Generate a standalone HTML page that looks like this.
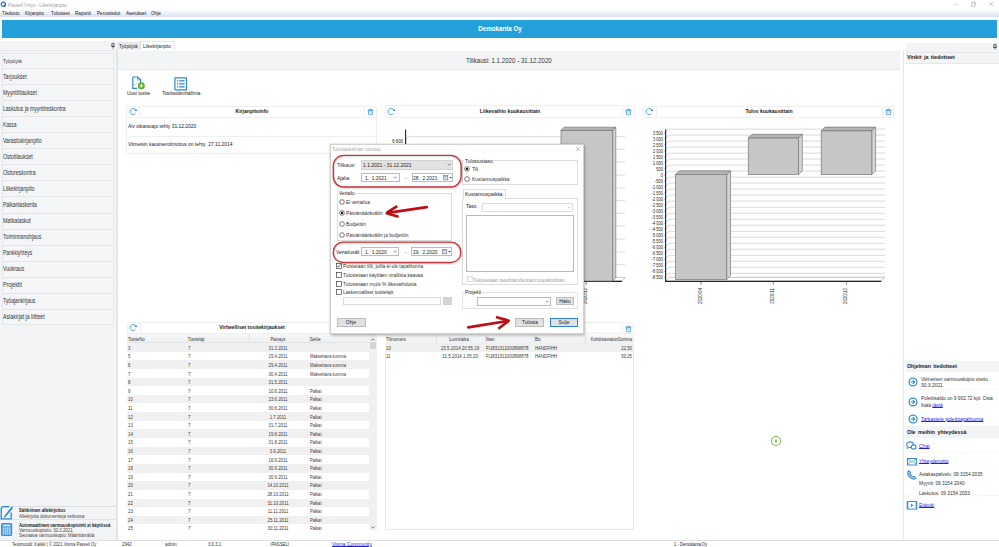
<!DOCTYPE html>
<html><head><meta charset="utf-8"><title>Passeli</title>
<style>
*{margin:0;padding:0;box-sizing:border-box;}
html,body{width:999px;height:547px;overflow:hidden;background:#fff;}
body{position:relative;font-family:"Liberation Sans",sans-serif;}
.t{position:absolute;white-space:nowrap;line-height:1;}
.b{position:absolute;}
svg.b{overflow:visible;}
</style></head><body>
<svg class="b" style="left:0.00px;top:0.00px;" width="8" height="8" viewBox="0 0 8 8"><circle cx="3.4" cy="4.3" r="2.1" fill="none" stroke="#2b5eaa" stroke-width="1.2"/><path d="M2.2 5.6 Q2.6 3.6 4.4 3.2" fill="none" stroke="#fff" stroke-width="0.9"/><circle cx="4.6" cy="5.7" r="0.9" fill="#2b5eaa"/></svg>
<div class="t" style="left:8.00px;top:3px;font-size:5.7px;color:#a0a0a0;transform:scaleX(0.8000);transform-origin:0 0;">Passeli Yritys - Liikekirjanpito</div>
<svg class="b" style="left:950.00px;top:0.00px;" width="50" height="9" viewBox="0 0 50 9"><path d="M3.6 4.4H7.7" stroke="#b4b4b4" stroke-width="0.6"/><rect x="21.5" y="2.9" width="3.3" height="3.3" fill="none" stroke="#a8a8a8" stroke-width="0.55"/><path d="M22.4 2.9V2.1H25.6V5.3H24.8" fill="none" stroke="#a8a8a8" stroke-width="0.5"/><path d="M39.1 2.0L43.1 6.0M43.1 2.0L39.1 6.0" stroke="#a4a4a4" stroke-width="0.55"/></svg>
<div class="b" style="left:0.00px;top:9.00px;width:999.00px;height:8.20px;background:linear-gradient(#ffffff,#f2f4f9 40%,#d9e0ef);"></div>
<div class="t" style="left:2.40px;top:11px;font-size:5.75px;color:#1a1a1a;transform:scaleX(0.8000);transform-origin:0 0;">Tiedosto</div>
<div class="t" style="left:25.00px;top:11px;font-size:5.75px;color:#1a1a1a;transform:scaleX(0.8000);transform-origin:0 0;">Kirjanpito</div>
<div class="t" style="left:50.70px;top:11px;font-size:5.75px;color:#1a1a1a;transform:scaleX(0.8000);transform-origin:0 0;">Tulosteet</div>
<div class="t" style="left:75.00px;top:11px;font-size:5.75px;color:#1a1a1a;transform:scaleX(0.8000);transform-origin:0 0;">Raportit</div>
<div class="t" style="left:96.70px;top:11px;font-size:5.75px;color:#1a1a1a;transform:scaleX(0.8000);transform-origin:0 0;">Perustiedot</div>
<div class="t" style="left:125.60px;top:11px;font-size:5.75px;color:#1a1a1a;transform:scaleX(0.8000);transform-origin:0 0;">Asetukset</div>
<div class="t" style="left:151.00px;top:11px;font-size:5.75px;color:#1a1a1a;transform:scaleX(0.8000);transform-origin:0 0;">Ohje</div>
<div class="b" style="left:2.20px;top:20.20px;width:995.10px;height:17.50px;background:#239fd9;"></div>
<div class="t" style="left:300.00px;width:400px;text-align:center;top:26px;font-size:6.62px;color:#fff;font-weight:bold;transform:scaleX(0.9434);transform-origin:50% 0;">Demokanta Oy</div>
<div class="b" style="left:0.00px;top:40.90px;width:116.00px;height:499.10px;background:#f3f4f6;"></div>
<div class="b" style="left:0.00px;top:49.60px;width:116.00px;height:0.80px;background:#e6e7ea;"></div>
<div class="b" style="left:116.00px;top:50.40px;width:1.60px;height:489.60px;background:#e4e5e7;"></div>
<svg class="b" style="left:111.00px;top:42.50px;" width="4" height="6" viewBox="0 0 4 6"><path d="M0.9 0.4H3.1V3.3H0.9Z" fill="none" stroke="#333" stroke-width="0.7"/><path d="M0.3 3.4H3.7M2 3.4V5.6" stroke="#333" stroke-width="0.7"/></svg>
<div class="b" style="left:2.00px;top:52.50px;width:112.00px;height:272.30px;background:#f4f5f7;border:0.8px solid #e7e8ea;"></div>
<div class="t" style="left:3.20px;top:59px;font-size:5.75px;color:#333;transform:scaleX(0.8000);transform-origin:0 0;">Työpöytä</div>
<div class="b" style="left:2.40px;top:68.01px;width:111.20px;height:0.90px;background:#e4e5e7;"></div>
<div class="t" style="left:3.20px;top:74px;font-size:6.5px;color:#333;transform:scaleX(0.8000);transform-origin:0 0;">Tarjoukset</div>
<div class="b" style="left:2.40px;top:84.07px;width:111.20px;height:0.90px;background:#e4e5e7;"></div>
<div class="t" style="left:3.20px;top:90px;font-size:6.47px;color:#333;transform:scaleX(0.8000);transform-origin:0 0;">Myyntitilaukset</div>
<div class="b" style="left:2.40px;top:100.13px;width:111.20px;height:0.90px;background:#e4e5e7;"></div>
<div class="t" style="left:3.20px;top:106px;font-size:6.4px;color:#333;transform:scaleX(0.7906);transform-origin:0 0;">Laskutus ja myyntireskontra</div>
<div class="b" style="left:2.40px;top:116.19px;width:111.20px;height:0.90px;background:#e4e5e7;"></div>
<div class="t" style="left:3.20px;top:122px;font-size:6.4px;color:#333;transform:scaleX(0.7500);transform-origin:0 0;">Kassa</div>
<div class="b" style="left:2.40px;top:132.25px;width:111.20px;height:0.90px;background:#e4e5e7;"></div>
<div class="t" style="left:3.20px;top:138px;font-size:6.56px;color:#333;transform:scaleX(0.8000);transform-origin:0 0;">Varastokirjanpito</div>
<div class="b" style="left:2.40px;top:148.31px;width:111.20px;height:0.90px;background:#e4e5e7;"></div>
<div class="t" style="left:3.20px;top:154px;font-size:6.45px;color:#333;transform:scaleX(0.8000);transform-origin:0 0;">Ostotilaukset</div>
<div class="b" style="left:2.40px;top:164.37px;width:111.20px;height:0.90px;background:#e4e5e7;"></div>
<div class="t" style="left:3.20px;top:170px;font-size:6.5px;color:#333;transform:scaleX(0.8000);transform-origin:0 0;">Ostoreskontra</div>
<div class="b" style="left:2.40px;top:180.43px;width:111.20px;height:0.90px;background:#e4e5e7;"></div>
<div class="t" style="left:3.20px;top:186px;font-size:6.5px;color:#333;transform:scaleX(0.8000);transform-origin:0 0;">Liikekirjanpito</div>
<div class="b" style="left:2.40px;top:196.49px;width:111.20px;height:0.90px;background:#e4e5e7;"></div>
<div class="t" style="left:3.20px;top:202px;font-size:6.4px;color:#333;transform:scaleX(0.7812);transform-origin:0 0;">Palkanlaskenta</div>
<div class="b" style="left:2.40px;top:212.55px;width:111.20px;height:0.90px;background:#e4e5e7;"></div>
<div class="t" style="left:3.20px;top:218px;font-size:6.5px;color:#333;transform:scaleX(0.8000);transform-origin:0 0;">Matkalaskut</div>
<div class="b" style="left:2.40px;top:228.61px;width:111.20px;height:0.90px;background:#e4e5e7;"></div>
<div class="t" style="left:3.20px;top:234px;font-size:6.4px;color:#333;transform:scaleX(0.7969);transform-origin:0 0;">Toiminnanohjaus</div>
<div class="b" style="left:2.40px;top:244.67px;width:111.20px;height:0.90px;background:#e4e5e7;"></div>
<div class="t" style="left:3.20px;top:250px;font-size:6.4px;color:#333;transform:scaleX(0.7734);transform-origin:0 0;">Pankkiyhteys</div>
<div class="b" style="left:2.40px;top:260.73px;width:111.20px;height:0.90px;background:#e4e5e7;"></div>
<div class="t" style="left:3.20px;top:266px;font-size:6.4px;color:#333;transform:scaleX(0.7906);transform-origin:0 0;">Vuokraus</div>
<div class="b" style="left:2.40px;top:276.79px;width:111.20px;height:0.90px;background:#e4e5e7;"></div>
<div class="t" style="left:3.20px;top:282px;font-size:6.56px;color:#333;transform:scaleX(0.8000);transform-origin:0 0;">Projektit</div>
<div class="b" style="left:2.40px;top:292.85px;width:111.20px;height:0.90px;background:#e4e5e7;"></div>
<div class="t" style="left:3.20px;top:298px;font-size:6.4px;color:#333;transform:scaleX(0.7922);transform-origin:0 0;">Työajankirjaus</div>
<div class="b" style="left:2.40px;top:308.91px;width:111.20px;height:0.90px;background:#e4e5e7;"></div>
<div class="t" style="left:3.20px;top:314px;font-size:6.52px;color:#333;transform:scaleX(0.8000);transform-origin:0 0;">Asiakirjat ja liitteet</div>
<div class="b" style="left:0.00px;top:506.10px;width:116.00px;height:0.80px;background:#dcdde0;"></div>
<div class="b" style="left:0.00px;top:519.00px;width:116.00px;height:0.70px;background:#e2e3e5;"></div>
<svg class="b" style="left:0.00px;top:505.00px;" width="14" height="15" viewBox="0 0 14 15"><path d="M9.4 1.6H2.9L1.2 3.4V13.9H11.2V7.6" fill="none" stroke="#2a86d4" stroke-width="1.3" stroke-linejoin="round"/><path d="M3.7 13.0L4.5 10.7L11.0 2.6Q12.4 1.4 12.9 2.0Q13.1 2.9 12.0 4.3L5.7 11.7Z" fill="#2a86d4"/></svg>
<div class="t" style="left:19.40px;top:509px;font-size:4.5px;color:#1a1a1a;font-weight:bold;transform:scaleX(0.9434);transform-origin:0 0;">Sähköinen allekirjoitus</div>
<div class="t" style="left:19.40px;top:514px;font-size:5.42px;color:#444;transform:scaleX(0.8000);transform-origin:0 0;">Allekirjoita dokumentteja verkossa</div>
<svg class="b" style="left:1.30px;top:523.00px;" width="11.2" height="13" viewBox="0 0 11.2 13"><rect x="0" y="0" width="11.2" height="13" rx="1.6" fill="#3a8fd6"/><rect x="1.7" y="1.5" width="7.8" height="1.9" fill="#d3e8f8"/><rect x="1.600" y="4.400" width="1.625" height="1.425" fill="#d3e8f8"/><rect x="3.725" y="4.400" width="1.625" height="1.425" fill="#d3e8f8"/><rect x="5.850" y="4.400" width="1.625" height="1.425" fill="#d3e8f8"/><rect x="7.975" y="4.400" width="1.625" height="1.425" fill="#d3e8f8"/><rect x="1.600" y="6.325" width="1.625" height="1.425" fill="#d3e8f8"/><rect x="3.725" y="6.325" width="1.625" height="1.425" fill="#d3e8f8"/><rect x="5.850" y="6.325" width="1.625" height="1.425" fill="#d3e8f8"/><rect x="7.975" y="6.325" width="1.625" height="1.425" fill="#d3e8f8"/><rect x="1.600" y="8.250" width="1.625" height="1.425" fill="#d3e8f8"/><rect x="3.725" y="8.250" width="1.625" height="1.425" fill="#d3e8f8"/><rect x="5.850" y="8.250" width="1.625" height="1.425" fill="#d3e8f8"/><rect x="7.975" y="8.250" width="1.625" height="1.425" fill="#d3e8f8"/><rect x="1.600" y="10.175" width="1.625" height="1.425" fill="#d3e8f8"/><rect x="3.725" y="10.175" width="1.625" height="1.425" fill="#d3e8f8"/><rect x="5.850" y="10.175" width="1.625" height="1.425" fill="#d3e8f8"/><rect x="7.975" y="10.175" width="1.625" height="1.425" fill="#d3e8f8"/></svg>
<div class="t" style="left:19.40px;top:524px;font-size:4.56px;color:#1a1a1a;font-weight:bold;transform:scaleX(0.9434);transform-origin:0 0;">Automaattinen varmuuskopiointi ei käytössä</div>
<div class="t" style="left:19.40px;top:528px;font-size:5.42px;color:#444;transform:scaleX(0.8000);transform-origin:0 0;">Varmuuskopioitu: 30.3.2021</div>
<div class="t" style="left:19.40px;top:533px;font-size:5.42px;color:#444;transform:scaleX(0.8000);transform-origin:0 0;">Seuraava varmuuskopio: Määrittämättä</div>
<div class="b" style="left:117.00px;top:42.40px;width:22.80px;height:7.80px;background:#ededef;border:0.6px solid #e2e3e5;border-bottom:none;"></div>
<div class="t" style="left:119.40px;top:44px;font-size:5.75px;color:#222;transform:scaleX(0.8000);transform-origin:0 0;">Työpöytä</div>
<div class="b" style="left:139.80px;top:41.30px;width:35.60px;height:9.10px;background:#fff;border:0.6px solid #e4e5e7;border-bottom:none;"></div>
<div class="t" style="left:142.60px;top:44px;font-size:5.75px;color:#222;transform:scaleX(0.8000);transform-origin:0 0;">Liikekirjanpito</div>
<div class="b" style="left:117.60px;top:50.40px;width:785.80px;height:489.60px;background:#fff;"></div>
<div class="b" style="left:118.20px;top:51.30px;width:781.50px;height:18.60px;background:#f3f4f6;border-bottom:0.7px solid #e8e9eb;"></div>
<div class="t" style="left:466.40px;top:57px;font-size:7.71px;color:#333;transform:scaleX(0.8000);transform-origin:0 0;">Tilikausi: 1.1.2020 - 31.12.2020</div>
<svg class="b" style="left:131.00px;top:76.00px;" width="13" height="14" viewBox="0 0 13 14"><path d="M1.8 1H6.8L9.6 3.8V7.2M1.8 1V12.4H6" fill="none" stroke="#2f86cc" stroke-width="1.2"/><path d="M6.6 1V4H9.6" fill="none" stroke="#2f86cc" stroke-width="0.7"/><path d="M3.5 9.5L6.6 6.2" stroke="#8bb" stroke-width="0.6"/><circle cx="10.3" cy="9.8" r="3.5" fill="#5ba52e"/><path d="M8.3 9.8H12.3M10.3 7.8V11.8" stroke="#fff" stroke-width="1.1"/></svg>
<div class="t" style="left:127.00px;top:90px;font-size:6.16px;color:#222;transform:scaleX(0.8000);transform-origin:0 0;">Uusi tosite</div>
<svg class="b" style="left:174.00px;top:76.50px;" width="14" height="14" viewBox="0 0 14 14"><rect x="0.9" y="0.9" width="11.6" height="12" rx="0.6" fill="none" stroke="#2f86cc" stroke-width="1.2"/><g fill="#2f86cc"><rect x="3" y="3.2" width="1.3" height="1.3"/><rect x="5.2" y="3.2" width="5.4" height="1.3"/><rect x="3" y="6.2" width="1.3" height="1.3"/><rect x="5.2" y="6.2" width="5.4" height="1.3"/><rect x="3" y="9.2" width="1.3" height="1.3"/><rect x="5.2" y="9.2" width="5.4" height="1.3"/></g></svg>
<div class="t" style="left:161.50px;top:90px;font-size:6.05px;color:#222;transform:scaleX(0.8000);transform-origin:0 0;">Tositteidenhallinta</div>
<div class="b" style="left:126.30px;top:105.60px;width:250.30px;height:48.90px;border:0.8px solid #efeff0;background:#fff;border-radius:1.5px;"></div>
<div class="b" style="left:126.30px;top:105.60px;width:250.30px;height:12.70px;border:0.8px solid #efeff0;background:#fff;border-radius:1.5px;"></div>
<div class="b" style="left:139.30px;top:106.10px;width:0.70px;height:11.70px;background:#f0f0f1;"></div>
<svg class="b" style="left:128.60px;top:108.25px;" width="8" height="8" viewBox="0 0 8 8"><path d="M7.0 2.4A3.1 3.1 0 1 0 6.5 5.4" fill="none" stroke="#4a9ad8" stroke-width="0.9"/><circle cx="7.0" cy="2.3" r="0.95" fill="#2f86d4"/></svg>
<div class="b" style="left:363.90px;top:106.10px;width:0.70px;height:11.70px;background:#f0f0f1;"></div>
<svg class="b" style="left:366.80px;top:108.35px;" width="7" height="7.4" viewBox="0 0 7 7.4"><path d="M1.2 2.3H5.8L5.3 6.8H1.7Z" fill="#c4e2f6" stroke="#4a9ad8" stroke-width="0.75"/><path d="M0.6 2H6.4M2.6 2V1H4.4V2" fill="none" stroke="#4a9ad8" stroke-width="0.7"/><path d="M2.3 5.6H4.7" stroke="#fff" stroke-width="0.9"/></svg>
<div class="t" style="left:51.60px;width:400px;text-align:center;top:109px;font-size:5.37px;color:#1a1a1a;font-weight:bold;transform:scaleX(0.9434);transform-origin:50% 0;">Kirjanpitoinfo</div>
<div class="t" style="left:128.00px;top:123px;font-size:6.18px;color:#222;transform:scaleX(0.8000);transform-origin:0 0;">Alv oikaisuajo tehty 31.12.2020</div>
<div class="b" style="left:126.60px;top:135.80px;width:249.70px;height:0.70px;background:#efeff0;"></div>
<div class="t" style="left:128.00px;top:141px;font-size:6.15px;color:#222;transform:scaleX(0.8000);transform-origin:0 0;">Viimeisin kausiveroilmoitus on tehty &nbsp;27.11.2014</div>
<div class="b" style="left:384.50px;top:105.40px;width:250.10px;height:12.90px;border:0.8px solid #efeff0;background:#fff;border-radius:1.5px;"></div>
<div class="b" style="left:397.50px;top:105.90px;width:0.70px;height:11.90px;background:#f0f0f1;"></div>
<svg class="b" style="left:386.80px;top:108.15px;" width="8" height="8" viewBox="0 0 8 8"><path d="M7.0 2.4A3.1 3.1 0 1 0 6.5 5.4" fill="none" stroke="#4a9ad8" stroke-width="0.9"/><circle cx="7.0" cy="2.3" r="0.95" fill="#2f86d4"/></svg>
<div class="b" style="left:621.90px;top:105.90px;width:0.70px;height:11.90px;background:#f0f0f1;"></div>
<svg class="b" style="left:624.80px;top:108.25px;" width="7" height="7.4" viewBox="0 0 7 7.4"><path d="M1.2 2.3H5.8L5.3 6.8H1.7Z" fill="#c4e2f6" stroke="#4a9ad8" stroke-width="0.75"/><path d="M0.6 2H6.4M2.6 2V1H4.4V2" fill="none" stroke="#4a9ad8" stroke-width="0.7"/><path d="M2.3 5.6H4.7" stroke="#fff" stroke-width="0.9"/></svg>
<div class="t" style="left:309.70px;width:400px;text-align:center;top:109px;font-size:5.37px;color:#1a1a1a;font-weight:bold;transform:scaleX(0.9434);transform-origin:50% 0;">Liikevaihto kuukausittain</div>
<div class="b" style="left:643.10px;top:105.50px;width:251.20px;height:12.90px;border:0.8px solid #efeff0;background:#fff;border-radius:1.5px;"></div>
<div class="b" style="left:656.10px;top:106.00px;width:0.70px;height:11.90px;background:#f0f0f1;"></div>
<svg class="b" style="left:645.40px;top:108.25px;" width="8" height="8" viewBox="0 0 8 8"><path d="M7.0 2.4A3.1 3.1 0 1 0 6.5 5.4" fill="none" stroke="#4a9ad8" stroke-width="0.9"/><circle cx="7.0" cy="2.3" r="0.95" fill="#2f86d4"/></svg>
<div class="b" style="left:881.60px;top:106.00px;width:0.70px;height:11.90px;background:#f0f0f1;"></div>
<svg class="b" style="left:884.50px;top:108.35px;" width="7" height="7.4" viewBox="0 0 7 7.4"><path d="M1.2 2.3H5.8L5.3 6.8H1.7Z" fill="#c4e2f6" stroke="#4a9ad8" stroke-width="0.75"/><path d="M0.6 2H6.4M2.6 2V1H4.4V2" fill="none" stroke="#4a9ad8" stroke-width="0.7"/><path d="M2.3 5.6H4.7" stroke="#fff" stroke-width="0.9"/></svg>
<div class="t" style="left:568.85px;width:400px;text-align:center;top:109px;font-size:5.37px;color:#1a1a1a;font-weight:bold;transform:scaleX(0.9434);transform-origin:50% 0;">Tulos kuukausittain</div>
<svg class="b" style="left:0.00px;top:0.00px;pointer-events:none;" width="999" height="547" viewBox="0 0 999 547"><path d="M405.6 140.60 Q406.5 136.60 409 136.60 H625" fill="none" stroke="#e2e2e2" stroke-width="1.25"/><path d="M405.6 153.40 Q406.5 149.40 409 149.40 H625" fill="none" stroke="#e2e2e2" stroke-width="1.25"/><path d="M405.6 166.20 Q406.5 162.20 409 162.20 H625" fill="none" stroke="#e2e2e2" stroke-width="1.25"/><path d="M405.6 179.00 Q406.5 175.00 409 175.00 H625" fill="none" stroke="#e2e2e2" stroke-width="1.25"/><path d="M405.6 191.80 Q406.5 187.80 409 187.80 H625" fill="none" stroke="#e2e2e2" stroke-width="1.25"/><path d="M405.6 204.60 Q406.5 200.60 409 200.60 H625" fill="none" stroke="#e2e2e2" stroke-width="1.25"/><path d="M405.6 217.40 Q406.5 213.40 409 213.40 H625" fill="none" stroke="#e2e2e2" stroke-width="1.25"/><path d="M405.6 230.20 Q406.5 226.20 409 226.20 H625" fill="none" stroke="#e2e2e2" stroke-width="1.25"/><path d="M405.6 243.00 Q406.5 239.00 409 239.00 H625" fill="none" stroke="#e2e2e2" stroke-width="1.25"/><path d="M405.6 255.80 Q406.5 251.80 409 251.80 H625" fill="none" stroke="#e2e2e2" stroke-width="1.25"/><path d="M405.6 268.60 Q406.5 264.60 409 264.60 H625" fill="none" stroke="#e2e2e2" stroke-width="1.25"/><path d="M405.6 281.2 H622 L625.3 277.4 H409 Z" fill="#fff" stroke="#999" stroke-width="0.6"/><path d="M405.6 129.4V281.4H622" fill="none" stroke="#222" stroke-width="1.1"/><path d="M561 130.4 L564 127.2 H615.8 L612.7 130.4Z" fill="#b4b4b4" stroke="#6a6a6a" stroke-width="0.6"/><path d="M612.7 130.4 L615.8 127.2 V277.8 L612.7 281Z" fill="#d4d4d4" stroke="#666" stroke-width="0.6"/><rect x="561" y="130.4" width="51.7" height="150.6" fill="#c6c6c6" stroke="#777" stroke-width="0.7"/><path d="M586.3 281.4V284.6" stroke="#444" stroke-width="0.6"/></svg>
<div class="t" style="left:2.80px;width:400px;text-align:right;top:139px;font-size:5.38px;color:#222;transform:scaleX(0.8000);transform-origin:100% 0;">6 600</div>
<div class="t" style="left:583.6px;top:287.6px;font-size:4.45px;color:#222;writing-mode:vertical-rl;transform:rotate(180deg);">2020/12</div>
<svg class="b" style="left:0.00px;top:0.00px;pointer-events:none;" width="999" height="547" viewBox="0 0 999 547"><path d="M665.6 132.90 Q667 129.30 669.5 129.00 H885" fill="none" stroke="#e2e2e2" stroke-width="1.25"/><path d="M664 132.90 H665.6" stroke="#888" stroke-width="0.5"/><path d="M665.6 138.92 Q667 135.32 669.5 135.02 H885" fill="none" stroke="#e2e2e2" stroke-width="1.25"/><path d="M664 138.92 H665.6" stroke="#888" stroke-width="0.5"/><path d="M665.6 144.94 Q667 141.34 669.5 141.04 H885" fill="none" stroke="#e2e2e2" stroke-width="1.25"/><path d="M664 144.94 H665.6" stroke="#888" stroke-width="0.5"/><path d="M665.6 150.96 Q667 147.36 669.5 147.06 H885" fill="none" stroke="#e2e2e2" stroke-width="1.25"/><path d="M664 150.96 H665.6" stroke="#888" stroke-width="0.5"/><path d="M665.6 156.98 Q667 153.38 669.5 153.08 H885" fill="none" stroke="#e2e2e2" stroke-width="1.25"/><path d="M664 156.98 H665.6" stroke="#888" stroke-width="0.5"/><path d="M665.6 163.00 Q667 159.40 669.5 159.10 H885" fill="none" stroke="#e2e2e2" stroke-width="1.25"/><path d="M664 163.00 H665.6" stroke="#888" stroke-width="0.5"/><path d="M665.6 169.02 Q667 165.42 669.5 165.12 H885" fill="none" stroke="#e2e2e2" stroke-width="1.25"/><path d="M664 169.02 H665.6" stroke="#888" stroke-width="0.5"/><path d="M665.6 175.04 Q667 171.44 669.5 171.14 H885" fill="none" stroke="#e2e2e2" stroke-width="1.25"/><path d="M664 175.04 H665.6" stroke="#888" stroke-width="0.5"/><path d="M665.6 181.06 Q667 177.46 669.5 177.16 H885" fill="none" stroke="#e2e2e2" stroke-width="1.25"/><path d="M664 181.06 H665.6" stroke="#888" stroke-width="0.5"/><path d="M665.6 187.08 Q667 183.48 669.5 183.18 H885" fill="none" stroke="#e2e2e2" stroke-width="1.25"/><path d="M664 187.08 H665.6" stroke="#888" stroke-width="0.5"/><path d="M665.6 193.10 Q667 189.50 669.5 189.20 H885" fill="none" stroke="#e2e2e2" stroke-width="1.25"/><path d="M664 193.10 H665.6" stroke="#888" stroke-width="0.5"/><path d="M665.6 199.12 Q667 195.52 669.5 195.22 H885" fill="none" stroke="#e2e2e2" stroke-width="1.25"/><path d="M664 199.12 H665.6" stroke="#888" stroke-width="0.5"/><path d="M665.6 205.14 Q667 201.54 669.5 201.24 H885" fill="none" stroke="#e2e2e2" stroke-width="1.25"/><path d="M664 205.14 H665.6" stroke="#888" stroke-width="0.5"/><path d="M665.6 211.16 Q667 207.56 669.5 207.26 H885" fill="none" stroke="#e2e2e2" stroke-width="1.25"/><path d="M664 211.16 H665.6" stroke="#888" stroke-width="0.5"/><path d="M665.6 217.18 Q667 213.58 669.5 213.28 H885" fill="none" stroke="#e2e2e2" stroke-width="1.25"/><path d="M664 217.18 H665.6" stroke="#888" stroke-width="0.5"/><path d="M665.6 223.20 Q667 219.60 669.5 219.30 H885" fill="none" stroke="#e2e2e2" stroke-width="1.25"/><path d="M664 223.20 H665.6" stroke="#888" stroke-width="0.5"/><path d="M665.6 229.22 Q667 225.62 669.5 225.32 H885" fill="none" stroke="#e2e2e2" stroke-width="1.25"/><path d="M664 229.22 H665.6" stroke="#888" stroke-width="0.5"/><path d="M665.6 235.24 Q667 231.64 669.5 231.34 H885" fill="none" stroke="#e2e2e2" stroke-width="1.25"/><path d="M664 235.24 H665.6" stroke="#888" stroke-width="0.5"/><path d="M665.6 241.26 Q667 237.66 669.5 237.36 H885" fill="none" stroke="#e2e2e2" stroke-width="1.25"/><path d="M664 241.26 H665.6" stroke="#888" stroke-width="0.5"/><path d="M665.6 247.28 Q667 243.68 669.5 243.38 H885" fill="none" stroke="#e2e2e2" stroke-width="1.25"/><path d="M664 247.28 H665.6" stroke="#888" stroke-width="0.5"/><path d="M665.6 253.30 Q667 249.70 669.5 249.40 H885" fill="none" stroke="#e2e2e2" stroke-width="1.25"/><path d="M664 253.30 H665.6" stroke="#888" stroke-width="0.5"/><path d="M665.6 259.32 Q667 255.72 669.5 255.42 H885" fill="none" stroke="#e2e2e2" stroke-width="1.25"/><path d="M664 259.32 H665.6" stroke="#888" stroke-width="0.5"/><path d="M665.6 265.34 Q667 261.74 669.5 261.44 H885" fill="none" stroke="#e2e2e2" stroke-width="1.25"/><path d="M664 265.34 H665.6" stroke="#888" stroke-width="0.5"/><path d="M665.6 271.36 Q667 267.76 669.5 267.46 H885" fill="none" stroke="#e2e2e2" stroke-width="1.25"/><path d="M664 271.36 H665.6" stroke="#888" stroke-width="0.5"/><path d="M665.6 277.38 Q667 273.78 669.5 273.48 H885" fill="none" stroke="#e2e2e2" stroke-width="1.25"/><path d="M664 277.38 H665.6" stroke="#888" stroke-width="0.5"/><path d="M665.8 281.2 H881 L884.8 277.3 H669.5 Z" fill="#fff" stroke="#999" stroke-width="0.6"/><path d="M665.6 129.4V281.4H881.3" fill="none" stroke="#222" stroke-width="1.1"/><path d="M675.5 174.6 L679.3 170.79999999999998 H730.5 L726.7 174.6Z" fill="#b4b4b4" stroke="#6a6a6a" stroke-width="0.6"/><path d="M726.7 174.6 L730.5 170.79999999999998 V275.8 L726.7 279.6Z" fill="#d4d4d4" stroke="#666" stroke-width="0.6"/><rect x="675.5" y="174.6" width="51.20" height="105.00" fill="#c6c6c6" stroke="#777" stroke-width="0.7"/><path d="M748.3 138.1 L752.0999999999999 134.29999999999998 H802.3 L798.5 138.1Z" fill="#b4b4b4" stroke="#6a6a6a" stroke-width="0.6"/><path d="M798.5 138.1 L802.3 134.29999999999998 V170.79999999999998 L798.5 174.6Z" fill="#d4d4d4" stroke="#666" stroke-width="0.6"/><rect x="748.3" y="138.1" width="50.20" height="36.50" fill="#c6c6c6" stroke="#777" stroke-width="0.7"/><path d="M821.2 130.9 L825.0 127.10000000000001 H875.5999999999999 L871.8 130.9Z" fill="#b4b4b4" stroke="#6a6a6a" stroke-width="0.6"/><path d="M871.8 130.9 L875.5999999999999 127.10000000000001 V170.79999999999998 L871.8 174.6Z" fill="#d4d4d4" stroke="#666" stroke-width="0.6"/><rect x="821.2" y="130.9" width="50.60" height="43.70" fill="#c6c6c6" stroke="#777" stroke-width="0.7"/><path d="M701 281.4V284.8" stroke="#444" stroke-width="0.6"/><path d="M773.3 281.4V284.8" stroke="#444" stroke-width="0.6"/><path d="M846.4 281.4V284.8" stroke="#444" stroke-width="0.6"/></svg>
<div class="t" style="left:263.20px;width:400px;text-align:right;top:131px;font-size:5.0px;color:#222;transform:scaleX(0.8000);transform-origin:100% 0;">3 500</div>
<div class="t" style="left:263.20px;width:400px;text-align:right;top:137px;font-size:5.0px;color:#222;transform:scaleX(0.8000);transform-origin:100% 0;">3 000</div>
<div class="t" style="left:263.20px;width:400px;text-align:right;top:143px;font-size:5.0px;color:#222;transform:scaleX(0.8000);transform-origin:100% 0;">2 500</div>
<div class="t" style="left:263.20px;width:400px;text-align:right;top:149px;font-size:5.0px;color:#222;transform:scaleX(0.8000);transform-origin:100% 0;">2 000</div>
<div class="t" style="left:263.20px;width:400px;text-align:right;top:155px;font-size:5.0px;color:#222;transform:scaleX(0.8000);transform-origin:100% 0;">1 500</div>
<div class="t" style="left:263.20px;width:400px;text-align:right;top:161px;font-size:5.0px;color:#222;transform:scaleX(0.8000);transform-origin:100% 0;">1 000</div>
<div class="t" style="left:263.20px;width:400px;text-align:right;top:167px;font-size:5.0px;color:#222;transform:scaleX(0.8000);transform-origin:100% 0;">500</div>
<div class="t" style="left:263.20px;width:400px;text-align:right;top:173px;font-size:5.0px;color:#222;transform:scaleX(0.8000);transform-origin:100% 0;">0</div>
<div class="t" style="left:263.20px;width:400px;text-align:right;top:179px;font-size:5.0px;color:#222;transform:scaleX(0.8000);transform-origin:100% 0;">-500</div>
<div class="t" style="left:263.20px;width:400px;text-align:right;top:185px;font-size:5.0px;color:#222;transform:scaleX(0.8000);transform-origin:100% 0;">-1 000</div>
<div class="t" style="left:263.20px;width:400px;text-align:right;top:191px;font-size:5.0px;color:#222;transform:scaleX(0.8000);transform-origin:100% 0;">-1 500</div>
<div class="t" style="left:263.20px;width:400px;text-align:right;top:197px;font-size:5.0px;color:#222;transform:scaleX(0.8000);transform-origin:100% 0;">-2 000</div>
<div class="t" style="left:263.20px;width:400px;text-align:right;top:203px;font-size:5.0px;color:#222;transform:scaleX(0.8000);transform-origin:100% 0;">-2 500</div>
<div class="t" style="left:263.20px;width:400px;text-align:right;top:209px;font-size:5.0px;color:#222;transform:scaleX(0.8000);transform-origin:100% 0;">-3 000</div>
<div class="t" style="left:263.20px;width:400px;text-align:right;top:215px;font-size:5.0px;color:#222;transform:scaleX(0.8000);transform-origin:100% 0;">-3 500</div>
<div class="t" style="left:263.20px;width:400px;text-align:right;top:221px;font-size:5.0px;color:#222;transform:scaleX(0.8000);transform-origin:100% 0;">-4 000</div>
<div class="t" style="left:263.20px;width:400px;text-align:right;top:227px;font-size:5.0px;color:#222;transform:scaleX(0.8000);transform-origin:100% 0;">-4 500</div>
<div class="t" style="left:263.20px;width:400px;text-align:right;top:233px;font-size:5.0px;color:#222;transform:scaleX(0.8000);transform-origin:100% 0;">-5 000</div>
<div class="t" style="left:263.20px;width:400px;text-align:right;top:239px;font-size:5.0px;color:#222;transform:scaleX(0.8000);transform-origin:100% 0;">-5 500</div>
<div class="t" style="left:263.20px;width:400px;text-align:right;top:245px;font-size:5.0px;color:#222;transform:scaleX(0.8000);transform-origin:100% 0;">-6 000</div>
<div class="t" style="left:263.20px;width:400px;text-align:right;top:251px;font-size:5.0px;color:#222;transform:scaleX(0.8000);transform-origin:100% 0;">-6 500</div>
<div class="t" style="left:263.20px;width:400px;text-align:right;top:257px;font-size:5.0px;color:#222;transform:scaleX(0.8000);transform-origin:100% 0;">-7 000</div>
<div class="t" style="left:263.20px;width:400px;text-align:right;top:263px;font-size:5.0px;color:#222;transform:scaleX(0.8000);transform-origin:100% 0;">-7 500</div>
<div class="t" style="left:263.20px;width:400px;text-align:right;top:269px;font-size:5.0px;color:#222;transform:scaleX(0.8000);transform-origin:100% 0;">-8 000</div>
<div class="t" style="left:263.20px;width:400px;text-align:right;top:275px;font-size:5.0px;color:#222;transform:scaleX(0.8000);transform-origin:100% 0;">-8 500</div>
<div class="t" style="left:698.80px;top:287.6px;font-size:4.45px;color:#222;writing-mode:vertical-rl;transform:rotate(180deg);">2020/04</div>
<div class="t" style="left:771.10px;top:287.6px;font-size:4.45px;color:#222;writing-mode:vertical-rl;transform:rotate(180deg);">2020/11</div>
<div class="t" style="left:844.20px;top:287.6px;font-size:4.45px;color:#222;writing-mode:vertical-rl;transform:rotate(180deg);">2020/12</div>
<svg class="b" style="left:770.00px;top:435.00px;" width="12" height="12" viewBox="0 0 12 12"><circle cx="6" cy="6" r="4.55" fill="none" stroke="#7dba45" stroke-width="1.1"/><path d="M4.5 6H7.5M6 4.5V7.5" stroke="#7dba45" stroke-width="1.2"/></svg>
<div class="b" style="left:126.50px;top:321.90px;width:250.50px;height:12.40px;border:0.8px solid #efeff0;background:#fff;border-radius:1.5px;"></div>
<div class="b" style="left:139.50px;top:322.40px;width:0.70px;height:11.40px;background:#f0f0f1;"></div>
<svg class="b" style="left:128.80px;top:324.40px;" width="8" height="8" viewBox="0 0 8 8"><path d="M7.0 2.4A3.1 3.1 0 1 0 6.5 5.4" fill="none" stroke="#4a9ad8" stroke-width="0.9"/><circle cx="7.0" cy="2.3" r="0.95" fill="#2f86d4"/></svg>
<div class="b" style="left:364.30px;top:322.40px;width:0.70px;height:11.40px;background:#f0f0f1;"></div>
<svg class="b" style="left:367.20px;top:324.50px;" width="7" height="7.4" viewBox="0 0 7 7.4"><path d="M1.2 2.3H5.8L5.3 6.8H1.7Z" fill="#c4e2f6" stroke="#4a9ad8" stroke-width="0.75"/><path d="M0.6 2H6.4M2.6 2V1H4.4V2" fill="none" stroke="#4a9ad8" stroke-width="0.7"/><path d="M2.3 5.6H4.7" stroke="#fff" stroke-width="0.9"/></svg>
<div class="t" style="left:51.90px;width:400px;text-align:center;top:325px;font-size:5.37px;color:#1a1a1a;font-weight:bold;transform:scaleX(0.9434);transform-origin:50% 0;">Virheelliset tositekirjaukset</div>
<div class="b" style="left:126.50px;top:334.30px;width:250.50px;height:196.00px;border:0.8px solid #e6e6e7;border-top:none;background:#fff;"></div>
<div class="b" style="left:127.00px;top:334.30px;width:242.00px;height:9.10px;background:linear-gradient(#f6f7f9,#eef0f2);border-bottom:0.6px solid #e3e4e6;"></div>
<div class="b" style="left:187.00px;top:334.50px;width:0.70px;height:8.70px;background:#e0e1e3;"></div>
<div class="b" style="left:248.70px;top:334.50px;width:0.70px;height:8.70px;background:#e0e1e3;"></div>
<div class="b" style="left:308.70px;top:334.50px;width:0.70px;height:8.70px;background:#e0e1e3;"></div>
<div class="t" style="left:127.80px;top:337px;font-size:5.38px;color:#333;transform:scaleX(0.8000);transform-origin:0 0;">TositeNo</div>
<div class="t" style="left:188.30px;top:337px;font-size:5.38px;color:#333;transform:scaleX(0.8000);transform-origin:0 0;">Tositelaji</div>
<div class="t" style="left:78.10px;width:400px;text-align:center;top:337px;font-size:5.38px;color:#333;transform:scaleX(0.8000);transform-origin:50% 0;">Paivays</div>
<div class="t" style="left:309.80px;top:337px;font-size:5.38px;color:#333;transform:scaleX(0.8000);transform-origin:0 0;">Selite</div>
<div class="b" style="left:127.00px;top:343.30px;width:242.00px;height:186.70px;background:repeating-linear-gradient(#f0f0f0 0px,#f0f0f0 8.64px,#fff 8.64px,#fff 17.28px);"></div>
<div class="t" style="left:127.80px;top:346px;font-size:5.38px;color:#3a3a3a;transform:scaleX(0.8000);transform-origin:0 0;">3</div>
<div class="t" style="left:188.30px;top:346px;font-size:5.38px;color:#3a3a3a;transform:scaleX(0.8000);transform-origin:0 0;">7</div>
<div class="t" style="left:78.30px;width:400px;text-align:center;top:346px;font-size:5.38px;color:#3a3a3a;transform:scaleX(0.8000);transform-origin:50% 0;">31.3.2011</div>
<div class="t" style="left:127.80px;top:354px;font-size:5.38px;color:#3a3a3a;transform:scaleX(0.8000);transform-origin:0 0;">5</div>
<div class="t" style="left:188.30px;top:354px;font-size:5.38px;color:#3a3a3a;transform:scaleX(0.8000);transform-origin:0 0;">7</div>
<div class="t" style="left:78.30px;width:400px;text-align:center;top:354px;font-size:5.38px;color:#3a3a3a;transform:scaleX(0.8000);transform-origin:50% 0;">15.4.2011</div>
<div class="t" style="left:309.80px;top:354px;font-size:5.19px;color:#3a3a3a;transform:scaleX(0.8000);transform-origin:0 0;">Maksettava summa</div>
<div class="t" style="left:127.80px;top:363px;font-size:5.38px;color:#3a3a3a;transform:scaleX(0.8000);transform-origin:0 0;">6</div>
<div class="t" style="left:188.30px;top:363px;font-size:5.38px;color:#3a3a3a;transform:scaleX(0.8000);transform-origin:0 0;">7</div>
<div class="t" style="left:78.30px;width:400px;text-align:center;top:363px;font-size:5.38px;color:#3a3a3a;transform:scaleX(0.8000);transform-origin:50% 0;">29.4.2011</div>
<div class="t" style="left:309.80px;top:363px;font-size:5.19px;color:#3a3a3a;transform:scaleX(0.8000);transform-origin:0 0;">Maksettava summa</div>
<div class="t" style="left:127.80px;top:372px;font-size:5.38px;color:#3a3a3a;transform:scaleX(0.8000);transform-origin:0 0;">7</div>
<div class="t" style="left:188.30px;top:372px;font-size:5.38px;color:#3a3a3a;transform:scaleX(0.8000);transform-origin:0 0;">7</div>
<div class="t" style="left:78.30px;width:400px;text-align:center;top:372px;font-size:5.38px;color:#3a3a3a;transform:scaleX(0.8000);transform-origin:50% 0;">30.4.2011</div>
<div class="t" style="left:309.80px;top:372px;font-size:5.19px;color:#3a3a3a;transform:scaleX(0.8000);transform-origin:0 0;">Maksettava summa</div>
<div class="t" style="left:127.80px;top:380px;font-size:5.38px;color:#3a3a3a;transform:scaleX(0.8000);transform-origin:0 0;">8</div>
<div class="t" style="left:188.30px;top:380px;font-size:5.38px;color:#3a3a3a;transform:scaleX(0.8000);transform-origin:0 0;">7</div>
<div class="t" style="left:78.30px;width:400px;text-align:center;top:380px;font-size:5.38px;color:#3a3a3a;transform:scaleX(0.8000);transform-origin:50% 0;">31.5.2011</div>
<div class="t" style="left:127.80px;top:389px;font-size:5.38px;color:#3a3a3a;transform:scaleX(0.8000);transform-origin:0 0;">9</div>
<div class="t" style="left:188.30px;top:389px;font-size:5.38px;color:#3a3a3a;transform:scaleX(0.8000);transform-origin:0 0;">7</div>
<div class="t" style="left:78.30px;width:400px;text-align:center;top:389px;font-size:5.38px;color:#3a3a3a;transform:scaleX(0.8000);transform-origin:50% 0;">10.6.2011</div>
<div class="t" style="left:309.80px;top:389px;font-size:5.19px;color:#3a3a3a;transform:scaleX(0.8000);transform-origin:0 0;">Palkat</div>
<div class="t" style="left:127.80px;top:397px;font-size:5.38px;color:#3a3a3a;transform:scaleX(0.8000);transform-origin:0 0;">10</div>
<div class="t" style="left:188.30px;top:397px;font-size:5.38px;color:#3a3a3a;transform:scaleX(0.8000);transform-origin:0 0;">7</div>
<div class="t" style="left:78.30px;width:400px;text-align:center;top:397px;font-size:5.38px;color:#3a3a3a;transform:scaleX(0.8000);transform-origin:50% 0;">23.6.2011</div>
<div class="t" style="left:309.80px;top:397px;font-size:5.19px;color:#3a3a3a;transform:scaleX(0.8000);transform-origin:0 0;">Palkat</div>
<div class="t" style="left:127.80px;top:406px;font-size:5.38px;color:#3a3a3a;transform:scaleX(0.8000);transform-origin:0 0;">11</div>
<div class="t" style="left:188.30px;top:406px;font-size:5.38px;color:#3a3a3a;transform:scaleX(0.8000);transform-origin:0 0;">7</div>
<div class="t" style="left:78.30px;width:400px;text-align:center;top:406px;font-size:5.38px;color:#3a3a3a;transform:scaleX(0.8000);transform-origin:50% 0;">30.6.2011</div>
<div class="t" style="left:309.80px;top:406px;font-size:5.19px;color:#3a3a3a;transform:scaleX(0.8000);transform-origin:0 0;">Palkat</div>
<div class="t" style="left:127.80px;top:415px;font-size:5.38px;color:#3a3a3a;transform:scaleX(0.8000);transform-origin:0 0;">12</div>
<div class="t" style="left:188.30px;top:415px;font-size:5.38px;color:#3a3a3a;transform:scaleX(0.8000);transform-origin:0 0;">7</div>
<div class="t" style="left:78.30px;width:400px;text-align:center;top:415px;font-size:5.38px;color:#3a3a3a;transform:scaleX(0.8000);transform-origin:50% 0;">1.7.2011</div>
<div class="t" style="left:309.80px;top:415px;font-size:5.19px;color:#3a3a3a;transform:scaleX(0.8000);transform-origin:0 0;">Palkat</div>
<div class="t" style="left:127.80px;top:423px;font-size:5.38px;color:#3a3a3a;transform:scaleX(0.8000);transform-origin:0 0;">13</div>
<div class="t" style="left:188.30px;top:423px;font-size:5.38px;color:#3a3a3a;transform:scaleX(0.8000);transform-origin:0 0;">7</div>
<div class="t" style="left:78.30px;width:400px;text-align:center;top:423px;font-size:5.38px;color:#3a3a3a;transform:scaleX(0.8000);transform-origin:50% 0;">31.7.2011</div>
<div class="t" style="left:309.80px;top:423px;font-size:5.19px;color:#3a3a3a;transform:scaleX(0.8000);transform-origin:0 0;">Palkat</div>
<div class="t" style="left:127.80px;top:432px;font-size:5.38px;color:#3a3a3a;transform:scaleX(0.8000);transform-origin:0 0;">14</div>
<div class="t" style="left:188.30px;top:432px;font-size:5.38px;color:#3a3a3a;transform:scaleX(0.8000);transform-origin:0 0;">7</div>
<div class="t" style="left:78.30px;width:400px;text-align:center;top:432px;font-size:5.38px;color:#3a3a3a;transform:scaleX(0.8000);transform-origin:50% 0;">19.8.2011</div>
<div class="t" style="left:309.80px;top:432px;font-size:5.19px;color:#3a3a3a;transform:scaleX(0.8000);transform-origin:0 0;">Palkat</div>
<div class="t" style="left:127.80px;top:440px;font-size:5.38px;color:#3a3a3a;transform:scaleX(0.8000);transform-origin:0 0;">15</div>
<div class="t" style="left:188.30px;top:440px;font-size:5.38px;color:#3a3a3a;transform:scaleX(0.8000);transform-origin:0 0;">7</div>
<div class="t" style="left:78.30px;width:400px;text-align:center;top:440px;font-size:5.38px;color:#3a3a3a;transform:scaleX(0.8000);transform-origin:50% 0;">31.8.2011</div>
<div class="t" style="left:309.80px;top:440px;font-size:5.19px;color:#3a3a3a;transform:scaleX(0.8000);transform-origin:0 0;">Palkat</div>
<div class="t" style="left:127.80px;top:449px;font-size:5.38px;color:#3a3a3a;transform:scaleX(0.8000);transform-origin:0 0;">16</div>
<div class="t" style="left:188.30px;top:449px;font-size:5.38px;color:#3a3a3a;transform:scaleX(0.8000);transform-origin:0 0;">7</div>
<div class="t" style="left:78.30px;width:400px;text-align:center;top:449px;font-size:5.38px;color:#3a3a3a;transform:scaleX(0.8000);transform-origin:50% 0;">3.9.2011</div>
<div class="t" style="left:309.80px;top:449px;font-size:5.19px;color:#3a3a3a;transform:scaleX(0.8000);transform-origin:0 0;">Palkat</div>
<div class="t" style="left:127.80px;top:458px;font-size:5.38px;color:#3a3a3a;transform:scaleX(0.8000);transform-origin:0 0;">17</div>
<div class="t" style="left:188.30px;top:458px;font-size:5.38px;color:#3a3a3a;transform:scaleX(0.8000);transform-origin:0 0;">7</div>
<div class="t" style="left:78.30px;width:400px;text-align:center;top:458px;font-size:5.38px;color:#3a3a3a;transform:scaleX(0.8000);transform-origin:50% 0;">16.9.2011</div>
<div class="t" style="left:309.80px;top:458px;font-size:5.19px;color:#3a3a3a;transform:scaleX(0.8000);transform-origin:0 0;">Palkat</div>
<div class="t" style="left:127.80px;top:466px;font-size:5.38px;color:#3a3a3a;transform:scaleX(0.8000);transform-origin:0 0;">18</div>
<div class="t" style="left:188.30px;top:466px;font-size:5.38px;color:#3a3a3a;transform:scaleX(0.8000);transform-origin:0 0;">7</div>
<div class="t" style="left:78.30px;width:400px;text-align:center;top:466px;font-size:5.38px;color:#3a3a3a;transform:scaleX(0.8000);transform-origin:50% 0;">30.9.2011</div>
<div class="t" style="left:309.80px;top:466px;font-size:5.19px;color:#3a3a3a;transform:scaleX(0.8000);transform-origin:0 0;">Palkat</div>
<div class="t" style="left:127.80px;top:475px;font-size:5.38px;color:#3a3a3a;transform:scaleX(0.8000);transform-origin:0 0;">19</div>
<div class="t" style="left:188.30px;top:475px;font-size:5.38px;color:#3a3a3a;transform:scaleX(0.8000);transform-origin:0 0;">7</div>
<div class="t" style="left:78.30px;width:400px;text-align:center;top:475px;font-size:5.38px;color:#3a3a3a;transform:scaleX(0.8000);transform-origin:50% 0;">30.9.2011</div>
<div class="t" style="left:309.80px;top:475px;font-size:5.19px;color:#3a3a3a;transform:scaleX(0.8000);transform-origin:0 0;">Palkat</div>
<div class="t" style="left:127.80px;top:483px;font-size:5.38px;color:#3a3a3a;transform:scaleX(0.8000);transform-origin:0 0;">20</div>
<div class="t" style="left:188.30px;top:483px;font-size:5.38px;color:#3a3a3a;transform:scaleX(0.8000);transform-origin:0 0;">7</div>
<div class="t" style="left:78.30px;width:400px;text-align:center;top:483px;font-size:5.38px;color:#3a3a3a;transform:scaleX(0.8000);transform-origin:50% 0;">14.10.2011</div>
<div class="t" style="left:309.80px;top:483px;font-size:5.19px;color:#3a3a3a;transform:scaleX(0.8000);transform-origin:0 0;">Palkat</div>
<div class="t" style="left:127.80px;top:492px;font-size:5.38px;color:#3a3a3a;transform:scaleX(0.8000);transform-origin:0 0;">21</div>
<div class="t" style="left:188.30px;top:492px;font-size:5.38px;color:#3a3a3a;transform:scaleX(0.8000);transform-origin:0 0;">7</div>
<div class="t" style="left:78.30px;width:400px;text-align:center;top:492px;font-size:5.38px;color:#3a3a3a;transform:scaleX(0.8000);transform-origin:50% 0;">28.10.2011</div>
<div class="t" style="left:309.80px;top:492px;font-size:5.19px;color:#3a3a3a;transform:scaleX(0.8000);transform-origin:0 0;">Palkat</div>
<div class="t" style="left:127.80px;top:501px;font-size:5.38px;color:#3a3a3a;transform:scaleX(0.8000);transform-origin:0 0;">22</div>
<div class="t" style="left:188.30px;top:501px;font-size:5.38px;color:#3a3a3a;transform:scaleX(0.8000);transform-origin:0 0;">7</div>
<div class="t" style="left:78.30px;width:400px;text-align:center;top:501px;font-size:5.38px;color:#3a3a3a;transform:scaleX(0.8000);transform-origin:50% 0;">31.10.2011</div>
<div class="t" style="left:309.80px;top:501px;font-size:5.19px;color:#3a3a3a;transform:scaleX(0.8000);transform-origin:0 0;">Palkat</div>
<div class="t" style="left:127.80px;top:509px;font-size:5.38px;color:#3a3a3a;transform:scaleX(0.8000);transform-origin:0 0;">23</div>
<div class="t" style="left:188.30px;top:509px;font-size:5.38px;color:#3a3a3a;transform:scaleX(0.8000);transform-origin:0 0;">7</div>
<div class="t" style="left:78.30px;width:400px;text-align:center;top:509px;font-size:5.38px;color:#3a3a3a;transform:scaleX(0.8000);transform-origin:50% 0;">11.11.2011</div>
<div class="t" style="left:309.80px;top:509px;font-size:5.19px;color:#3a3a3a;transform:scaleX(0.8000);transform-origin:0 0;">Palkat</div>
<div class="t" style="left:127.80px;top:518px;font-size:5.38px;color:#3a3a3a;transform:scaleX(0.8000);transform-origin:0 0;">24</div>
<div class="t" style="left:188.30px;top:518px;font-size:5.38px;color:#3a3a3a;transform:scaleX(0.8000);transform-origin:0 0;">7</div>
<div class="t" style="left:78.30px;width:400px;text-align:center;top:518px;font-size:5.38px;color:#3a3a3a;transform:scaleX(0.8000);transform-origin:50% 0;">25.11.2011</div>
<div class="t" style="left:309.80px;top:518px;font-size:5.19px;color:#3a3a3a;transform:scaleX(0.8000);transform-origin:0 0;">Palkat</div>
<div class="t" style="left:127.80px;top:526px;font-size:5.38px;color:#3a3a3a;transform:scaleX(0.8000);transform-origin:0 0;">25</div>
<div class="t" style="left:188.30px;top:526px;font-size:5.38px;color:#3a3a3a;transform:scaleX(0.8000);transform-origin:0 0;">7</div>
<div class="t" style="left:78.30px;width:400px;text-align:center;top:526px;font-size:5.38px;color:#3a3a3a;transform:scaleX(0.8000);transform-origin:50% 0;">30.11.2011</div>
<div class="t" style="left:309.80px;top:526px;font-size:5.19px;color:#3a3a3a;transform:scaleX(0.8000);transform-origin:0 0;">Palkat</div>
<div class="b" style="left:369.20px;top:334.30px;width:7.40px;height:195.80px;background:#f0f0f0;"></div>
<div class="b" style="left:370.00px;top:342.40px;width:6.00px;height:6.20px;background:#d4d4d4;"></div>
<svg class="b" style="left:370.00px;top:336.50px;" width="6" height="5" viewBox="0 0 6 5"><path d="M1.3 3.5L3 1.8L4.7 3.5" fill="none" stroke="#444" stroke-width="0.7"/></svg>
<svg class="b" style="left:370.00px;top:524.50px;" width="6" height="5" viewBox="0 0 6 5"><path d="M1.3 1.5L3 3.2L4.7 1.5" fill="none" stroke="#444" stroke-width="0.7"/></svg>
<div class="b" style="left:384.80px;top:321.90px;width:249.70px;height:12.40px;border:0.8px solid #efeff0;background:#fff;border-radius:1.5px;"></div>
<div class="b" style="left:397.80px;top:322.40px;width:0.70px;height:11.40px;background:#f0f0f1;"></div>
<svg class="b" style="left:387.10px;top:324.40px;" width="8" height="8" viewBox="0 0 8 8"><path d="M7.0 2.4A3.1 3.1 0 1 0 6.5 5.4" fill="none" stroke="#4a9ad8" stroke-width="0.9"/><circle cx="7.0" cy="2.3" r="0.95" fill="#2f86d4"/></svg>
<div class="b" style="left:621.80px;top:322.40px;width:0.70px;height:11.40px;background:#f0f0f1;"></div>
<svg class="b" style="left:624.70px;top:324.50px;" width="7" height="7.4" viewBox="0 0 7 7.4"><path d="M1.2 2.3H5.8L5.3 6.8H1.7Z" fill="#c4e2f6" stroke="#4a9ad8" stroke-width="0.75"/><path d="M0.6 2H6.4M2.6 2V1H4.4V2" fill="none" stroke="#4a9ad8" stroke-width="0.7"/><path d="M2.3 5.6H4.7" stroke="#fff" stroke-width="0.9"/></svg>
<div class="t" style="left:309.80px;width:400px;text-align:center;top:325px;font-size:5.37px;color:#1a1a1a;font-weight:bold;transform:scaleX(0.9434);transform-origin:50% 0;"></div>
<div class="b" style="left:384.80px;top:334.30px;width:249.70px;height:196.00px;border:0.8px solid #e6e6e7;border-top:none;background:#fff;"></div>
<div class="b" style="left:385.40px;top:334.80px;width:248.60px;height:9.10px;background:linear-gradient(#f6f7f9,#eef0f2);border-bottom:0.6px solid #e3e4e6;"></div>
<div class="b" style="left:435.50px;top:335.00px;width:0.70px;height:8.60px;background:#e0e1e3;"></div>
<div class="b" style="left:484.60px;top:335.00px;width:0.70px;height:8.60px;background:#e0e1e3;"></div>
<div class="b" style="left:534.30px;top:335.00px;width:0.70px;height:8.60px;background:#e0e1e3;"></div>
<div class="b" style="left:584.50px;top:335.00px;width:0.70px;height:8.60px;background:#e0e1e3;"></div>
<div class="t" style="left:386.20px;top:337px;font-size:5.38px;color:#333;transform:scaleX(0.8000);transform-origin:0 0;">Tilinumero</div>
<div class="t" style="left:259.40px;width:400px;text-align:center;top:337px;font-size:5.38px;color:#333;transform:scaleX(0.8000);transform-origin:50% 0;">Luontiaika</div>
<div class="t" style="left:486.00px;top:337px;font-size:5.38px;color:#333;transform:scaleX(0.8000);transform-origin:0 0;">Iban</div>
<div class="t" style="left:535.30px;top:337px;font-size:5.38px;color:#333;transform:scaleX(0.8000);transform-origin:0 0;">Bic</div>
<div class="t" style="left:232.40px;width:400px;text-align:right;top:337px;font-size:5.1px;color:#333;transform:scaleX(0.8000);transform-origin:100% 0;">KohdistamatonSumma</div>
<div class="b" style="left:385.40px;top:343.20px;width:248.60px;height:8.60px;background:#f0f0f0;"></div>
<div class="t" style="left:386.20px;top:346px;font-size:5.38px;color:#3a3a3a;transform:scaleX(0.8000);transform-origin:0 0;">10</div>
<div class="t" style="left:259.60px;width:400px;text-align:center;top:346px;font-size:5.55px;color:#3a3a3a;transform:scaleX(0.8000);transform-origin:50% 0;">23.5.2014 20.55.19</div>
<div class="t" style="left:486.00px;top:346px;font-size:5.47px;color:#3a3a3a;transform:scaleX(0.8000);transform-origin:0 0;">FI1831311000898878</div>
<div class="t" style="left:535.30px;top:346px;font-size:5.38px;color:#3a3a3a;transform:scaleX(0.8000);transform-origin:0 0;">HANDFIHH</div>
<div class="t" style="left:232.40px;width:400px;text-align:right;top:346px;font-size:5.38px;color:#3a3a3a;transform:scaleX(0.8000);transform-origin:100% 0;">22,50</div>
<div class="t" style="left:386.20px;top:354px;font-size:5.38px;color:#3a3a3a;transform:scaleX(0.8000);transform-origin:0 0;">11</div>
<div class="t" style="left:259.60px;width:400px;text-align:center;top:354px;font-size:5.55px;color:#3a3a3a;transform:scaleX(0.8000);transform-origin:50% 0;">31.5.2014 1.05.20</div>
<div class="t" style="left:486.00px;top:354px;font-size:5.47px;color:#3a3a3a;transform:scaleX(0.8000);transform-origin:0 0;">FI1831311000898878</div>
<div class="t" style="left:535.30px;top:354px;font-size:5.38px;color:#3a3a3a;transform:scaleX(0.8000);transform-origin:0 0;">HANDFIHH</div>
<div class="t" style="left:232.40px;width:400px;text-align:right;top:354px;font-size:5.38px;color:#3a3a3a;transform:scaleX(0.8000);transform-origin:100% 0;">50,25</div>
<div class="b" style="left:903.40px;top:40.90px;width:95.60px;height:499.10px;background:#fff;"></div>
<div class="b" style="left:903.10px;top:50.40px;width:1.00px;height:489.60px;background:#e6e7e9;"></div>
<div class="b" style="left:906.00px;top:42.90px;width:93.00px;height:9.20px;background:#f3f4f6;"></div>
<svg class="b" style="left:993.20px;top:44.00px;" width="4" height="6" viewBox="0 0 4 6"><path d="M0.9 0.4H3.1V3.3H0.9Z" fill="none" stroke="#333" stroke-width="0.7"/><path d="M0.3 3.4H3.7M2 3.4V5.6" stroke="#333" stroke-width="0.7"/></svg>
<div class="b" style="left:906.00px;top:52.10px;width:93.00px;height:11.50px;background:#f3f4f6;border-top:0.6px solid #e6e7e9;border-bottom:0.6px solid #e6e7e9;"></div>
<div class="t" style="left:906.80px;top:55px;font-size:5.68px;color:#222;font-weight:bold;transform:scaleX(0.9434);transform-origin:0 0;word-spacing:1px;">Vinkit ja tiedotteet</div>
<div class="b" style="left:906.00px;top:361.10px;width:93.00px;height:10.70px;background:#f3f4f6;"></div>
<div class="t" style="left:907.00px;top:364px;font-size:5.57px;color:#222;font-weight:bold;transform:scaleX(0.9434);transform-origin:0 0;word-spacing:1px;">Ohjelman tiedotteet</div>
<svg class="b" style="left:907.80px;top:377.00px;" width="10" height="10" viewBox="0 0 10 10"><circle cx="5" cy="5" r="3.9" fill="#fff" stroke="#3b8fd2" stroke-width="1.3"/><path d="M2.6 5H6.5M4.8 3.2L6.6 5L4.8 6.8" fill="none" stroke="#3b8fd2" stroke-width="1.2"/></svg>
<div class="t" style="left:921.00px;top:376px;font-size:6.15px;color:#333;transform:scaleX(0.8000);transform-origin:0 0;">Viimeinen varmuuskopio otettu</div>
<div class="t" style="left:921.00px;top:382px;font-size:6.15px;color:#333;transform:scaleX(0.8000);transform-origin:0 0;">30.3.2021</div>
<div class="b" style="left:906.00px;top:389.20px;width:93.00px;height:0.60px;background:#f7f7f7;"></div>
<svg class="b" style="left:907.80px;top:396.50px;" width="10" height="10" viewBox="0 0 10 10"><circle cx="5" cy="5" r="3.9" fill="#fff" stroke="#3b8fd2" stroke-width="1.3"/><path d="M2.6 5H6.5M4.8 3.2L6.6 5L4.8 6.8" fill="none" stroke="#3b8fd2" stroke-width="1.2"/></svg>
<div class="t" style="left:921.00px;top:395px;font-size:6.01px;color:#333;transform:scaleX(0.8000);transform-origin:0 0;">Polettisaldo on 9 902.72 kpl. Osta</div>
<div class="t" style="left:921.00px;top:402px;font-size:6.06px;color:#333;transform:scaleX(0.8000);transform-origin:0 0;">lisää <span style="color:#1f1fe8;text-decoration:underline;text-decoration-thickness:0.6px;text-underline-offset:0.3px;">tästä</span></div>
<svg class="b" style="left:907.80px;top:414.00px;" width="10" height="10" viewBox="0 0 10 10"><circle cx="5" cy="5" r="3.9" fill="#fff" stroke="#3b8fd2" stroke-width="1.3"/><path d="M2.6 5H6.5M4.8 3.2L6.6 5L4.8 6.8" fill="none" stroke="#3b8fd2" stroke-width="1.2"/></svg>
<div class="t" style="left:921.00px;top:416px;font-size:6.25px;color:#1f1fe8;transform:scaleX(0.8000);transform-origin:0 0;text-decoration:underline;text-decoration-thickness:0.6px;text-underline-offset:0.3px;">Tarkastele polettitapahtumia</div>
<div class="b" style="left:906.00px;top:425.90px;width:93.00px;height:12.30px;background:#f3f4f6;"></div>
<div class="t" style="left:906.90px;top:430px;font-size:5.63px;color:#222;font-weight:bold;transform:scaleX(0.9434);transform-origin:0 0;word-spacing:1px;">Ole meihin yhteydessä</div>
<svg class="b" style="left:906.30px;top:440.80px;" width="11" height="9.5" viewBox="0 0 11 9.5"><ellipse cx="4.1" cy="3.7" rx="3.4" ry="2.8" fill="#fff" stroke="#3a8fd0" stroke-width="1.1"/><ellipse cx="7.6" cy="6.0" rx="2.4" ry="2.1" fill="#fff" stroke="#3a8fd0" stroke-width="1.1"/><path d="M1.6 5.7L0.9 7.6L3.2 6.4" fill="#fff" stroke="#3a8fd0" stroke-width="0.9"/></svg>
<div class="t" style="left:919.10px;top:443px;font-size:6.25px;color:#1f1fe8;transform:scaleX(0.8000);transform-origin:0 0;text-decoration:underline;text-decoration-thickness:0.6px;text-underline-offset:0.3px;">Chat</div>
<div class="b" style="left:906.00px;top:452.00px;width:93.00px;height:0.50px;background:#f7f7f7;"></div>
<svg class="b" style="left:906.80px;top:457.60px;" width="10" height="7.5" viewBox="0 0 10 7.5"><rect x="0.5" y="0.5" width="9" height="6.5" fill="#fff" stroke="#3a8fd0" stroke-width="1"/><path d="M0.8 1L5 4.3L9.2 1M0.8 6.6L3.6 3.4M9.2 6.6L6.4 3.4" fill="none" stroke="#3a8fd0" stroke-width="0.8"/></svg>
<div class="t" style="left:919.10px;top:458px;font-size:6.25px;color:#1f1fe8;transform:scaleX(0.8000);transform-origin:0 0;text-decoration:underline;text-decoration-thickness:0.6px;text-underline-offset:0.3px;">Yhteydenotto</div>
<svg class="b" style="left:906.50px;top:469.50px;" width="10" height="10" viewBox="0 0 10 10"><path d="M1.9 0.8C0.3 2 0.3 4.6 2.5 6.9C4.6 9.1 7.1 9.6 8.8 8.4L7.3 6.5C6.3 7.1 5.1 6.8 3.9 5.4C2.8 4.2 2.6 3 3.3 2.3Z" fill="#3a8fd0" fill-opacity="0.25" stroke="#3a8fd0" stroke-width="1.15"/></svg>
<div class="t" style="left:919.10px;top:472px;font-size:5.96px;color:#333;transform:scaleX(0.8000);transform-origin:0 0;">Asiakaspalvelu: 09 3154 2035</div>
<div class="t" style="left:919.10px;top:481px;font-size:5.96px;color:#333;transform:scaleX(0.8000);transform-origin:0 0;">Myynti: 09 3154 2040</div>
<div class="t" style="left:919.10px;top:491px;font-size:5.96px;color:#333;transform:scaleX(0.8000);transform-origin:0 0;">Laskutus: 09 3154 2033</div>
<div class="b" style="left:906.00px;top:495.20px;width:93.00px;height:0.50px;background:#f7f7f7;"></div>
<svg class="b" style="left:906.80px;top:500.60px;" width="10" height="8.6" viewBox="0 0 10 8.6"><rect x="0.5" y="0.5" width="9" height="7.6" fill="#fff" stroke="#3a8fd0" stroke-width="1"/><path d="M0.5 0.5V8.1M9.5 0.5V8.1" stroke="#3a8fd0" stroke-width="1.6"/><path d="M3.8 2.4L6.6 4.3L3.8 6.2Z" fill="#3a8fd0"/></svg>
<div class="t" style="left:919.10px;top:502px;font-size:6.25px;color:#1f1fe8;transform:scaleX(0.8000);transform-origin:0 0;text-decoration:underline;text-decoration-thickness:0.6px;text-underline-offset:0.3px;">Etätuki</div>
<div class="b" style="left:0.00px;top:539.80px;width:999.00px;height:7.20px;background:#fff;border-top:0.7px solid #dedfe1;"></div>
<div class="t" style="left:11.90px;top:542px;font-size:5.24px;color:#333;transform:scaleX(0.8000);transform-origin:0 0;">Testimoodi: Kaikki | © 2021 Visma Passeli Oy</div>
<div class="t" style="left:122.10px;top:542px;font-size:5.38px;color:#333;transform:scaleX(0.8000);transform-origin:0 0;">2942</div>
<div class="t" style="left:165.00px;top:542px;font-size:5.38px;color:#333;transform:scaleX(0.8000);transform-origin:0 0;">admin</div>
<div class="t" style="left:208.00px;top:542px;font-size:5.38px;color:#333;transform:scaleX(0.8000);transform-origin:0 0;">3.0.3.1</div>
<div class="t" style="left:268.60px;top:542px;font-size:5.38px;color:#333;transform:scaleX(0.8000);transform-origin:0 0;">.\PASSELI</div>
<div class="t" style="left:332.10px;top:541px;font-size:6.16px;color:#1f1fe8;transform:scaleX(0.8000);transform-origin:0 0;text-decoration:underline;text-decoration-thickness:0.6px;text-underline-offset:0.3px;">Visma Community</div>
<div class="t" style="left:674.20px;top:542px;font-size:5.15px;color:#222;transform:scaleX(0.8000);transform-origin:0 0;">1 - Demokanta Oy</div>
<div class="b" style="left:329.90px;top:144.10px;width:254.50px;height:189.90px;background:#fff;border:0.7px solid #d2d2d2;box-shadow:0 0 1.8px rgba(0,0,0,0.22),1px 1.5px 2.5px rgba(0,0,0,0.2);"></div>
<div class="t" style="left:331.80px;top:147px;font-size:5.72px;color:#a8a8a8;transform:scaleX(0.8000);transform-origin:0 0;">Tuloslaskelman tulostus</div>
<svg class="b" style="left:576.20px;top:147.30px;" width="4.2" height="4.2" viewBox="0 0 4.2 4.2"><path d="M0.3 0.3L3.9 3.9M3.9 0.3L0.3 3.9" stroke="#888" stroke-width="0.6"/></svg>
<div class="t" style="left:336.50px;top:162px;font-size:6.12px;color:#333;transform:scaleX(0.8000);transform-origin:0 0;">Tilikausi</div>
<div class="b" style="left:361.20px;top:160.40px;width:91.70px;height:9.30px;background:#e3e3e3;border:0.7px solid #d2d2d2;"></div>
<svg class="b" style="left:446.60px;top:163.45px;" width="5" height="3.2" viewBox="0 0 5 3.2"><path d="M0.7 0.8L2.2 2.3L3.7 0.8" fill="none" stroke="#555" stroke-width="0.7"/></svg>
<div class="t" style="left:363.40px;top:162px;font-size:6.19px;color:#222;transform:scaleX(0.8000);transform-origin:0 0;">1.1.2021 - 31.12.2021</div>
<div class="t" style="left:336.50px;top:175px;font-size:6.12px;color:#222;transform:scaleX(0.8000);transform-origin:0 0;">Ajalta</div>
<div class="b" style="left:361.20px;top:173.40px;width:38.40px;height:8.80px;background:#fff;border:0.7px solid #bcbcbc;"></div>
<div class="t" style="left:365.00px;top:175px;font-size:6.12px;color:#222;transform:scaleX(0.8000);transform-origin:0 0;">1.&nbsp; 1.2021</div>
<svg class="b" style="left:393.30px;top:176.20px;" width="5" height="3.2" viewBox="0 0 5 3.2"><path d="M0.7 0.8L2.2 2.3L3.7 0.8" fill="none" stroke="#555" stroke-width="0.7"/></svg>
<div class="t" style="left:405.10px;top:175px;font-size:6.12px;color:#333;transform:scaleX(0.8000);transform-origin:0 0;">-</div>
<div class="b" style="left:411.50px;top:173.30px;width:41.40px;height:8.80px;background:#fff;border:0.7px solid #bcbcbc;"></div>
<div class="t" style="left:413.20px;top:175px;font-size:6.12px;color:#222;transform:scaleX(0.8000);transform-origin:0 0;">28.&nbsp; 2.2021</div>
<svg class="b" style="left:442.50px;top:175.10px;" width="10" height="5.6" viewBox="0 0 10 5.6"><rect x="0.6" y="0.5" width="4.2" height="4.4" fill="#d9dde5" stroke="#777" stroke-width="0.6"/><path d="M0.6 1.6H4.8" stroke="#888" stroke-width="0.5"/><path d="M6.3 2.0H8.9L7.6 3.4Z" fill="#1a3e7a"/></svg>
<div class="b" style="left:337.20px;top:192.80px;width:115.10px;height:48.20px;border:0.7px solid #dcdcdc;"></div>
<div class="b" style="left:338.50px;top:190.00px;width:17.10px;height:5.00px;background:#fff;"></div>
<div class="t" style="left:339.10px;top:191px;font-size:5.85px;color:#222;transform:scaleX(0.8000);transform-origin:0 0;">Vertailu</div>
<svg class="b" style="left:338.50px;top:198.70px;" width="6" height="6" viewBox="0 0 6 6"><circle cx="3" cy="3" r="2.35" fill="#fff" stroke="#333" stroke-width="0.65"/></svg>
<div class="t" style="left:346.00px;top:199px;font-size:6.04px;color:#333;transform:scaleX(0.8000);transform-origin:0 0;">Ei vertailua</div>
<svg class="b" style="left:338.50px;top:209.80px;" width="6" height="6" viewBox="0 0 6 6"><circle cx="3" cy="3" r="2.35" fill="#fff" stroke="#333" stroke-width="0.65"/><circle cx="3" cy="3" r="1.15" fill="#111"/></svg>
<div class="t" style="left:346.00px;top:210px;font-size:6.04px;color:#333;transform:scaleX(0.8000);transform-origin:0 0;">Päivämääräväliin</div>
<svg class="b" style="left:338.50px;top:221.00px;" width="6" height="6" viewBox="0 0 6 6"><circle cx="3" cy="3" r="2.35" fill="#fff" stroke="#333" stroke-width="0.65"/></svg>
<div class="t" style="left:346.00px;top:221px;font-size:6.04px;color:#333;transform:scaleX(0.8000);transform-origin:0 0;">Budjettiin</div>
<svg class="b" style="left:338.50px;top:232.10px;" width="6" height="6" viewBox="0 0 6 6"><circle cx="3" cy="3" r="2.35" fill="#fff" stroke="#333" stroke-width="0.65"/></svg>
<div class="t" style="left:346.00px;top:232px;font-size:6.04px;color:#333;transform:scaleX(0.8000);transform-origin:0 0;">Päivämääräväliin ja budjettiin</div>
<div class="t" style="left:335.90px;top:249px;font-size:6.04px;color:#222;transform:scaleX(0.8000);transform-origin:0 0;">Vertailuväli</div>
<div class="b" style="left:361.20px;top:247.40px;width:37.90px;height:8.80px;background:#fff;border:0.7px solid #bcbcbc;"></div>
<div class="t" style="left:365.00px;top:249px;font-size:6.12px;color:#222;transform:scaleX(0.8000);transform-origin:0 0;">1.&nbsp; 1.2020</div>
<svg class="b" style="left:392.80px;top:250.20px;" width="5" height="3.2" viewBox="0 0 5 3.2"><path d="M0.7 0.8L2.2 2.3L3.7 0.8" fill="none" stroke="#555" stroke-width="0.7"/></svg>
<div class="t" style="left:404.80px;top:249px;font-size:6.12px;color:#333;transform:scaleX(0.8000);transform-origin:0 0;">-</div>
<div class="b" style="left:411.30px;top:247.40px;width:41.00px;height:8.80px;background:#fff;border:0.7px solid #bcbcbc;"></div>
<div class="t" style="left:413.00px;top:249px;font-size:6.12px;color:#222;transform:scaleX(0.8000);transform-origin:0 0;">29.&nbsp; 2.2020</div>
<svg class="b" style="left:441.90px;top:249.20px;" width="10" height="5.6" viewBox="0 0 10 5.6"><rect x="0.6" y="0.5" width="4.2" height="4.4" fill="#d9dde5" stroke="#777" stroke-width="0.6"/><path d="M0.6 1.6H4.8" stroke="#888" stroke-width="0.5"/><path d="M6.3 2.0H8.9L7.6 3.4Z" fill="#1a3e7a"/></svg>
<svg class="b" style="left:336.20px;top:263.25px;" width="6" height="6" viewBox="0 0 6 6"><rect x="0.35" y="0.35" width="5" height="5" fill="#fff" stroke="#333" stroke-width="0.65"/><path d="M1.2 2.9L2.4 4.1L4.6 1.4" fill="none" stroke="#222" stroke-width="0.7"/></svg>
<div class="t" style="left:343.00px;top:263px;font-size:6.0px;color:#333;transform:scaleX(0.8000);transform-origin:0 0;">Poistetaan tilit, joilla ei ole tapahtumia</div>
<svg class="b" style="left:336.20px;top:272.25px;" width="6" height="6" viewBox="0 0 6 6"><rect x="0.35" y="0.35" width="5" height="5" fill="#fff" stroke="#333" stroke-width="0.65"/></svg>
<div class="t" style="left:343.00px;top:272px;font-size:6.0px;color:#333;transform:scaleX(0.8000);transform-origin:0 0;">Tulostetaan käyttäen virallista kaavaa</div>
<svg class="b" style="left:336.20px;top:280.75px;" width="6" height="6" viewBox="0 0 6 6"><rect x="0.35" y="0.35" width="5" height="5" fill="#fff" stroke="#333" stroke-width="0.65"/></svg>
<div class="t" style="left:343.00px;top:281px;font-size:6.0px;color:#333;transform:scaleX(0.8000);transform-origin:0 0;">Tulostetaan myös % liikevaihdosta</div>
<svg class="b" style="left:336.20px;top:289.25px;" width="6" height="6" viewBox="0 0 6 6"><rect x="0.35" y="0.35" width="5" height="5" fill="#fff" stroke="#333" stroke-width="0.65"/></svg>
<div class="t" style="left:343.00px;top:289px;font-size:6.0px;color:#333;transform:scaleX(0.8000);transform-origin:0 0;">Laskennalliset tositelajit</div>
<div class="b" style="left:342.50px;top:296.70px;width:98.50px;height:8.70px;background:#fff;border:0.7px solid #d9d9d9;"></div>
<div class="b" style="left:443.10px;top:297.30px;width:9.10px;height:7.40px;background:#d6d6d6;border:0.6px solid #cfcfcf;"></div>
<div class="t" style="left:247.60px;width:400px;text-align:center;top:300px;font-size:4.5px;color:#999;transform:scaleX(0.8000);transform-origin:50% 0;">...</div>
<div class="b" style="left:336.90px;top:318.00px;width:28.70px;height:8.70px;background:#e1e1e1;border:0.7px solid #bdbdbd;"></div>
<div class="t" style="left:151.25px;width:400px;text-align:center;top:319px;font-size:6.12px;color:#222;transform:scaleX(0.8000);transform-origin:50% 0;">Ohje</div>
<div class="b" style="left:462.40px;top:160.30px;width:115.80px;height:25.00px;border:0.7px solid #dcdcdc;"></div>
<div class="b" style="left:464.00px;top:158.00px;width:30.00px;height:4.50px;background:#fff;"></div>
<div class="t" style="left:465.10px;top:158px;font-size:6.15px;color:#222;transform:scaleX(0.8000);transform-origin:0 0;">Tulostustaso</div>
<svg class="b" style="left:464.20px;top:165.60px;" width="6" height="6" viewBox="0 0 6 6"><circle cx="3" cy="3" r="2.35" fill="#fff" stroke="#333" stroke-width="0.65"/><circle cx="3" cy="3" r="1.15" fill="#111"/></svg>
<div class="t" style="left:471.80px;top:166px;font-size:6.15px;color:#333;transform:scaleX(0.8000);transform-origin:0 0;">Tili</div>
<svg class="b" style="left:464.20px;top:175.80px;" width="6" height="6" viewBox="0 0 6 6"><circle cx="3" cy="3" r="2.35" fill="#fff" stroke="#333" stroke-width="0.65"/></svg>
<div class="t" style="left:471.80px;top:176px;font-size:6.18px;color:#333;transform:scaleX(0.8000);transform-origin:0 0;">Kustannuspaikka</div>
<div class="b" style="left:462.00px;top:198.10px;width:116.00px;height:87.30px;border:0.7px solid #dcdcdc;"></div>
<div class="b" style="left:462.80px;top:189.30px;width:42.90px;height:9.50px;background:#fff;border:0.7px solid #dcdcdc;border-bottom:none;"></div>
<div class="t" style="left:465.10px;top:191px;font-size:6.18px;color:#222;transform:scaleX(0.8000);transform-origin:0 0;">Kustannuspaikka</div>
<div class="t" style="left:466.30px;top:203px;font-size:6.18px;color:#222;transform:scaleX(0.8000);transform-origin:0 0;">Taso</div>
<div class="b" style="left:481.90px;top:202.80px;width:91.60px;height:9.10px;background:#fff;border:0.7px solid #dedede;"></div>
<svg class="b" style="left:567.20px;top:205.75px;" width="5" height="3.2" viewBox="0 0 5 3.2"><path d="M0.7 0.8L2.2 2.3L3.7 0.8" fill="none" stroke="#aaa" stroke-width="0.7"/></svg>
<div class="b" style="left:466.30px;top:215.30px;width:107.40px;height:56.70px;background:#fff;border:0.8px solid #b9b9c0;"></div>
<svg class="b" style="left:466.80px;top:276.45px;" width="6" height="6" viewBox="0 0 6 6"><rect x="0.35" y="0.35" width="5" height="5" fill="#fff" stroke="#c8c8c8" stroke-width="0.65"/></svg>
<div class="t" style="left:472.70px;top:277px;font-size:6.12px;color:#a0a0a0;transform:scaleX(0.8000);transform-origin:0 0;">Tulostetaan tasoittain/kustannuspaikoittain</div>
<div class="b" style="left:461.80px;top:291.90px;width:115.90px;height:17.20px;border:0.7px solid #e3e3e3;"></div>
<div class="b" style="left:463.50px;top:289.50px;width:18.50px;height:5.00px;background:#fff;"></div>
<div class="t" style="left:465.10px;top:289px;font-size:6.06px;color:#222;transform:scaleX(0.8000);transform-origin:0 0;">Projekti</div>
<div class="b" style="left:477.30px;top:297.30px;width:74.10px;height:8.60px;background:#fff;border:0.7px solid #bababa;"></div>
<svg class="b" style="left:545.10px;top:300.00px;" width="5" height="3.2" viewBox="0 0 5 3.2"><path d="M0.7 0.8L2.2 2.3L3.7 0.8" fill="none" stroke="#666" stroke-width="0.7"/></svg>
<div class="b" style="left:555.70px;top:297.30px;width:18.20px;height:7.40px;background:#e1e1e1;border:0.7px solid #bdbdbd;"></div>
<div class="t" style="left:364.80px;width:400px;text-align:center;top:298px;font-size:6.12px;color:#222;transform:scaleX(0.8000);transform-origin:50% 0;">Haku</div>
<div class="b" style="left:515.40px;top:318.10px;width:28.40px;height:8.50px;background:#e1e1e1;border:0.7px solid #bdbdbd;"></div>
<div class="t" style="left:329.60px;width:400px;text-align:center;top:319px;font-size:6.12px;color:#222;transform:scaleX(0.8000);transform-origin:50% 0;">Tulosta</div>
<div class="b" style="left:550.00px;top:318.10px;width:28.00px;height:8.50px;background:#e1e1e1;border:0.9px solid #2f7fd8;"></div>
<div class="t" style="left:364.00px;width:400px;text-align:center;top:319px;font-size:6.12px;color:#222;transform:scaleX(0.8000);transform-origin:50% 0;">Sulje</div>
<svg class="b" style="left:0.00px;top:0.00px;pointer-events:none;" width="999" height="547" viewBox="0 0 999 547"><rect x="333.3" y="155.3" width="127.8" height="31.7" rx="10.5" fill="none" stroke="rgba(0,0,0,0.10)" stroke-width="2.6" transform="translate(0.6,0.9)"/><rect x="333.3" y="155.3" width="127.8" height="31.7" rx="10.5" fill="none" stroke="#cc3338" stroke-width="1.35"/><rect x="333.3" y="242.1" width="127.5" height="20.4" rx="9.8" fill="none" stroke="rgba(0,0,0,0.10)" stroke-width="2.6" transform="translate(0.6,0.9)"/><rect x="333.3" y="242.1" width="127.5" height="20.4" rx="9.8" fill="none" stroke="#cc3338" stroke-width="1.35"/><path d="M426.8 207.1 L389.5 212.6" stroke="#bb0f16" stroke-width="2.6" stroke-linecap="round"/><path d="M386.5 212.9 L397.2 206.1" stroke="#bb0f16" stroke-width="2.7" stroke-linecap="butt"/><path d="M386.5 213.3 L398.6 216.7" stroke="#bb0f16" stroke-width="2.7" stroke-linecap="butt"/><path d="M384.9 213.4 L390.6 209.2 L391.6 215.6Z" fill="#bb0f16"/><path d="M468.2 327.4 L506.0 321.3" stroke="#bb0f16" stroke-width="2.6" stroke-linecap="round"/><path d="M508.9 320.9 L496.0 317.0" stroke="#bb0f16" stroke-width="2.7" stroke-linecap="butt"/><path d="M508.9 320.7 L498.3 328.8" stroke="#bb0f16" stroke-width="2.7" stroke-linecap="butt"/><path d="M510.5 320.6 L504.2 318.0 L505.0 324.8Z" fill="#bb0f16"/></svg>
</body></html>
